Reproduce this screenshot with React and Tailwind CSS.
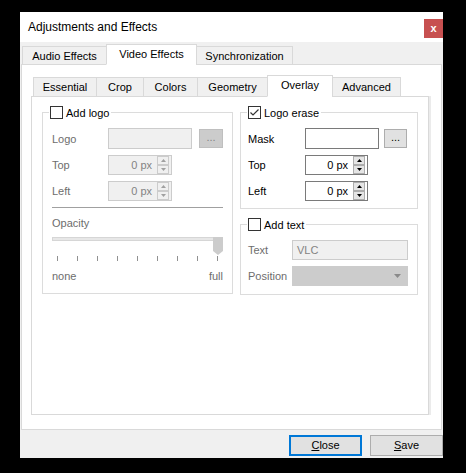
import React from 'react';

const outerTabs = [
  { label: 'Audio Effects', w: 'w-[85px]' },
  { label: 'Video Effects', w: 'w-[91px]', active: true },
  { label: 'Synchronization', w: 'w-[97px]' },
];

const innerTabs = [
  { label: 'Essential', w: 'w-[64px]' },
  { label: 'Crop', w: 'w-[48px]' },
  { label: 'Colors', w: 'w-[55px]' },
  { label: 'Geometry', w: 'w-[71px]' },
  { label: 'Overlay', w: 'w-[66px]', active: true },
  { label: 'Advanced', w: 'w-[69px]' },
];

const Checkbox = ({ checked }) => (
  <span className="w-[13px] h-[13px] border border-[#333333] bg-white flex items-center justify-center">
    {checked && (
      <svg width="11" height="11" viewBox="0 0 11 11">
        <path d="M1.5 5.5 L4 8 L9.5 2.5" fill="none" stroke="#333333" strokeWidth="1.2" />
      </svg>
    )}
  </span>
);

const Arrow = ({ up, disabled }) => (
  <div className={`flex-1 flex items-center justify-center border ${disabled ? 'border-[#cccccc] bg-[#f0f0f0]' : 'border-[#adadad] bg-[#e5e5e5]'}`}>
    <svg width="5" height="3" viewBox="0 0 5 3">
      <path d={up ? 'M0 3 L2.5 0 L5 3 Z' : 'M0 0 L2.5 3 L5 0 Z'} fill={disabled ? '#a0a0a0' : '#000000'} />
    </svg>
  </div>
);

const Spin = ({ disabled, w }) => (
  <div className={`${w} h-[20px] flex items-center border ${disabled ? 'border-[#cccccc] bg-[#f0f0f0] text-[#838383]' : 'border-[#7a7a7a] bg-white text-black'}`}>
    <span className="flex-1 text-right pr-[5px]">0 px</span>
    <div className="w-[12px] h-[18px] mr-[2px] flex flex-col">
      <Arrow up disabled={disabled} />
      <Arrow disabled={disabled} />
    </div>
  </div>
);

const Legend = ({ children, checked }) => (
  <div className="absolute left-[6px] top-[-7px] h-[13px] bg-white px-[1px] flex items-center gap-[3px] text-black">
    <Checkbox checked={checked} />
    <span className="pr-[1px]">{children}</span>
  </div>
);

const Row = ({ label, lw, dim, className = '', children }) => (
  <div className={`flex items-center ${className}`}>
    <span className={`${lw} ${dim ? 'text-[#6d6d6d]' : 'text-black'}`}>{label}</span>
    {children}
  </div>
);

export default function App() {
  return (
    <div className="w-[466px] h-[473px] bg-black pt-[12px] pl-[20px] text-[11px] leading-[14px] font-['Liberation_Sans',Arial,sans-serif]">
      <div className="w-[423px] h-[446px] bg-[#f0f0f0] flex flex-col">
        {/* title bar */}
        <div className="h-[30px] bg-white flex justify-between">
          <span className="pl-[8px] pt-[8px] text-[12px] text-black">Adjustments and Effects</span>
          <div className="mt-[7px] w-[19px] h-[19px] bg-[#c75050] flex items-center justify-center text-white text-[11px] font-bold leading-none">x</div>
        </div>

        {/* outer tabs */}
        <div className="mt-[2px] h-[21px] pl-[2px] flex items-end -mb-px relative z-10">
          {outerTabs.map((t) => (
            <div
              key={t.label}
              className={`${t.w} -ml-px first:ml-0 flex items-center justify-center border border-[#d9d9d9] text-black ${t.active ? 'h-[21px] bg-white border-b-white pb-[2px]' : 'h-[19px] bg-[#f0f0f0]'}`}
            >
              {t.label}
            </div>
          ))}
        </div>

        <div className="ml-[1px] w-[421px] h-[366px] border border-[#d9d9d9] bg-white pt-[10px] pl-[9px]">
          {/* inner tabs */}
          <div className="h-[22px] pl-[2px] flex items-end -mb-px relative z-10">
            {innerTabs.map((t) => (
              <div
                key={t.label}
                className={`${t.w} -ml-px first:ml-0 flex items-center justify-center border border-[#d9d9d9] text-black ${t.active ? 'h-[22px] bg-white border-b-white pb-[2px]' : 'h-[20px] bg-[#f0f0f0]'}`}
              >
                {t.label}
              </div>
            ))}
          </div>

          <div className="w-[398px] h-[319px] border border-[#d9d9d9] bg-white shadow-[2px_0_0_#ebebeb] pt-[15px] pl-[10px] flex gap-[7px] items-start">
            {/* Add logo */}
            <div className="relative w-[191px] h-[182px] border border-[#dcdcdc] pt-[15px] pl-[9px] pr-[9px]">
              <Legend>Add logo</Legend>
              <Row label="Logo" lw="w-[56px]" dim className="h-[21px]">
                <div className="w-[84px] h-[21px] border border-[#cccccc] bg-[#f0f0f0]" />
                <div className="ml-[7px] w-[24px] h-[19px] border border-[#bfbfbf] bg-[#cccccc] text-[#838383] flex items-center justify-center leading-none pb-[3px]">...</div>
              </Row>
              <Row label="Top" lw="w-[56px]" dim className="mt-[6px] h-[20px]">
                <Spin disabled w="w-[64px]" />
              </Row>
              <Row label="Left" lw="w-[56px]" dim className="mt-[6px] h-[20px]">
                <Spin disabled w="w-[64px]" />
              </Row>
              <div className="mt-[6px] h-px bg-[#a0a0a0]" />
              <div className="mt-[8px] text-[#6d6d6d]">Opacity</div>
              <div className="mt-[5px] h-[18px] relative">
                <div className="mt-[7px] h-[4px] bg-[#e7e7e7] border border-[#d6d6d6]" />
                <svg className="absolute right-0 top-0" width="10" height="18" viewBox="0 0 10 18">
                  <path d="M0 0 H10 V14 L5 18 L0 14 Z" fill="#cccccc" />
                </svg>
              </div>
              <div className="mt-[1px] h-[6px] px-[5px] flex justify-between">
                {Array.from({ length: 9 }).map((_, i) => (
                  <span key={i} className="w-px h-[5px] bg-[#909090]" />
                ))}
              </div>
              <div className="mt-[7px] flex justify-between text-[#6d6d6d]">
                <span>none</span>
                <span>full</span>
              </div>
            </div>

            <div className="w-[178px] flex flex-col">
              {/* Logo erase */}
              <div className="relative h-[97px] border border-[#dcdcdc] pt-[15px] pl-[7px]">
                <Legend checked>Logo erase</Legend>
                <Row label="Mask" lw="w-[57px]" className="h-[21px]">
                  <div className="w-[74px] h-[21px] border border-[#7a7a7a] bg-white" />
                  <div className="ml-[5px] w-[23px] h-[19px] border border-[#adadad] bg-[#e1e1e1] text-black flex items-center justify-center leading-none pb-[3px]">...</div>
                </Row>
                <Row label="Top" lw="w-[57px]" className="mt-[6px] h-[20px]">
                  <Spin w="w-[63px]" />
                </Row>
                <Row label="Left" lw="w-[57px]" className="mt-[6px] h-[20px]">
                  <Spin w="w-[63px]" />
                </Row>
              </div>

              {/* Add text */}
              <div className="relative mt-[15px] h-[71px] border border-[#dcdcdc] pt-[15px] pl-[7px]">
                <Legend>Add text</Legend>
                <Row label="Text" lw="w-[44px]" dim className="h-[20px]">
                  <div className="w-[116px] h-[20px] border border-[#cccccc] bg-[#f0f0f0] text-[#838383] flex items-center pl-[4px]">VLC</div>
                </Row>
                <Row label="Position" lw="w-[44px]" dim className="mt-[6px] h-[20px]">
                  <div className="w-[116px] h-[20px] border border-[#cccccc] bg-[#cccccc] flex items-center justify-end pr-[6px]">
                    <svg width="7" height="4" viewBox="0 0 7 4">
                      <path d="M0 0 H7 L3.5 4 Z" fill="#8a8a8a" />
                    </svg>
                  </div>
                </Row>
              </div>
            </div>
          </div>
        </div>

        {/* buttons */}
        <div className="mt-[5px] flex justify-end gap-[8px]">
          <button className="w-[73px] h-[21px] border-2 border-[#0078d7] bg-[#e1e1e1] text-black text-[11px] leading-none">
            <span className="underline">C</span>lose
          </button>
          <button className="w-[73px] h-[21px] border border-[#adadad] bg-[#e1e1e1] text-black text-[11px] leading-none">
            <span className="underline">S</span>ave
          </button>
        </div>
      </div>
    </div>
  );
}
